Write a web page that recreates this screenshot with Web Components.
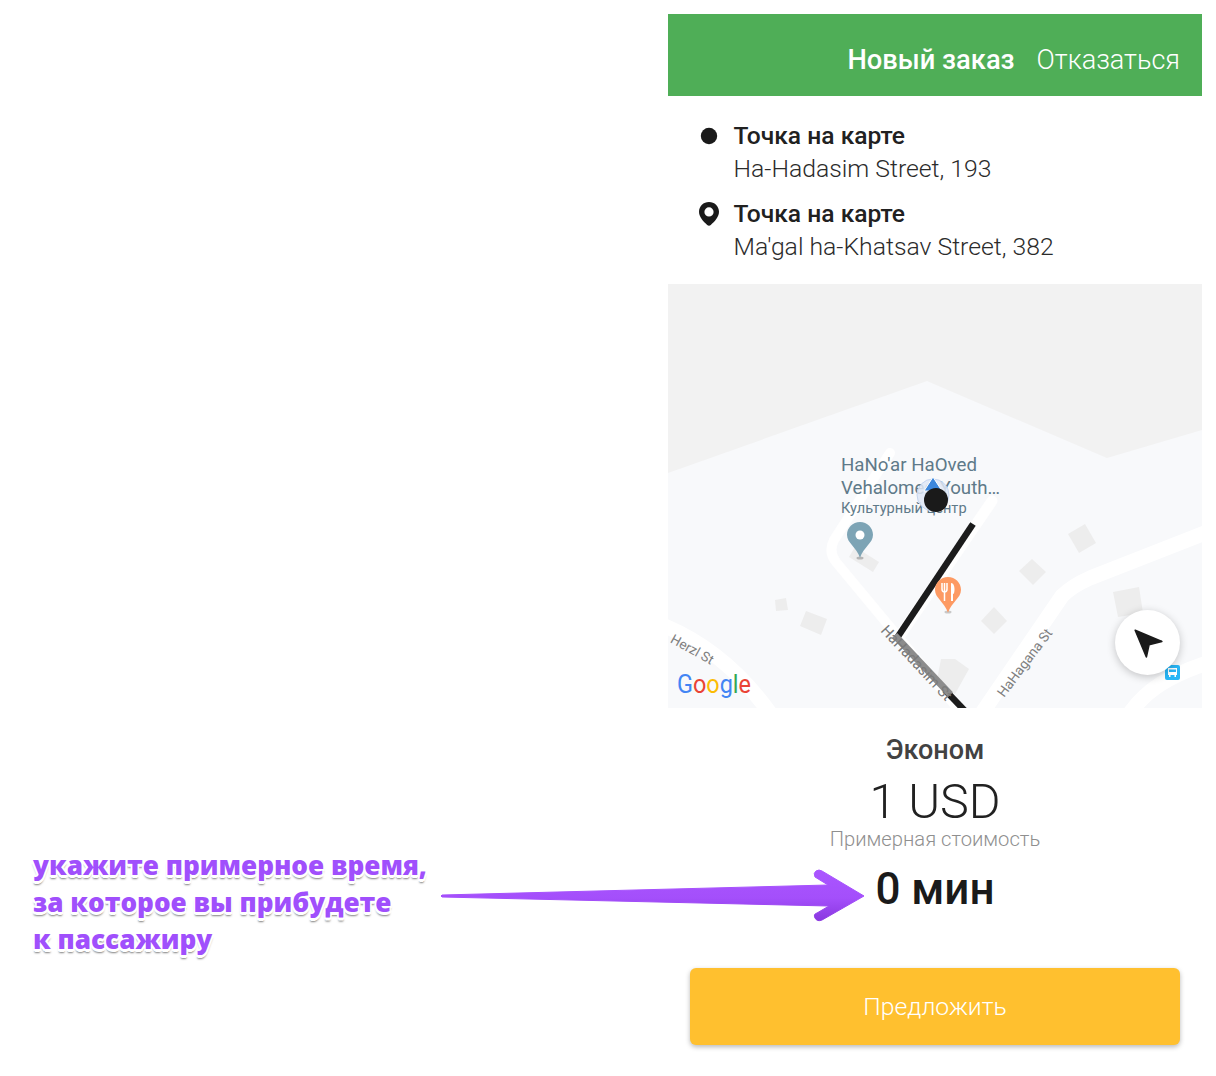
<!DOCTYPE html>
<html lang="ru"><head><meta charset="utf-8"><title>Новый заказ</title>
<style>
html,body{margin:0;padding:0;background:#fff}
body{font-family:Roboto,sans-serif;width:1216px;height:1076px;position:relative;overflow:hidden}
</style></head><body>
<order-screen>
  <order-header slot="header" title="Новый заказ" action="Отказаться"></order-header>
  <route-point kind="dot" name="Точка на карте" address="Ha-Hadasim Street, 193"></route-point>
  <route-point kind="pin" name="Точка на карте" address="Ma'gal ha-Khatsav Street, 382"></route-point>
  <route-map></route-map>
  <fare-summary tariff="Эконом" price="1 USD" note="Примерная стоимость" eta="0 мин"></fare-summary>
  <offer-button>Предложить</offer-button>
</order-screen>
<time-callout></time-callout>
<script>
function def(name, html){
  customElements.define(name, class extends HTMLElement{
    connectedCallback(){
      if(this.shadowRoot) return;
      const r=this.attachShadow({mode:'open'});
      r.innerHTML=typeof html==='function'?html(this):html;
    }
  });
}
def('order-screen',`<style>
:host{display:flex;flex-direction:column;width:534px;margin:14px 0 0 668px}
</style><slot name="header"></slot><slot></slot>`);
def('order-header',e=>`<style>
:host{display:flex;height:82px;background:#4fae57;color:#fff;align-items:center;justify-content:flex-end;padding:10px 22px 0;gap:22px;font-size:27px;box-sizing:border-box}
b{font-weight:500;font-size:27.300px}span{font-weight:300}
</style><b>${e.getAttribute('title')}</b><span>${e.getAttribute('action')}</span>`);
def('route-point',e=>`<style>
:host{display:grid;grid-template-columns:65.500px 1fr;color:#212121;font-size:24.750px;line-height:33px}
:host(:first-of-type){padding-top:23px}
:host([kind=pin]){padding-top:12px;padding-bottom:21px}
.i{display:flex;justify-content:center;align-items:center;padding-left:16px;height:33px}
b{font-weight:500;display:block;font-size:24.600px}span{font-weight:300;display:block;color:#2b2b2b}
svg{display:block}
</style><div class="i">${e.getAttribute('kind')==='dot'
 ?'<svg width="18" height="18" viewBox="0 0 18 18"><circle cx="9" cy="9" r="8.2" fill="#1a1a1a"/></svg>'
 :'<svg width="20" height="24" viewBox="0 0 20 24"><path fill="#1a1a1a" fill-rule="evenodd" d="M10 0C4.500 0 0 4.200 0 9.800c0 5.200 4.400 9.800 8.200 13.200 1 .9 2.600.9 3.600 0C15.600 19.600 20 15 20 9.800 20 4.200 15.500 0 10 0zm0 5.300a4.600 4.600 0 1 1 0 9.200 4.600 4.600 0 0 1 0-9.200z"/></svg>'}</div>
<div><b>${e.getAttribute('name')}</b><span>${e.getAttribute('address')}</span></div>`);
def('route-map',`<style>
:host{display:block;height:424px;background:#f8f9fb;position:relative;overflow:hidden}
svg{display:block}
.recenter{position:absolute;left:447px;top:326px;width:65px;height:65px;border-radius:50%;background:#fff;box-shadow:0 2px 8px rgba(0,0,0,.22);display:flex;align-items:center;justify-content:center}
</style>
<svg width="534" height="424" viewBox="668 284 534 424" font-family="Roboto,sans-serif">
<path fill="#f2f2f2" d="M668 284H1202V430L1107 458 927 381 668 473Z"/>
<g fill="none" stroke="#fff" stroke-linecap="round" stroke-linejoin="round">
<path stroke-width="10" d="M890 453 834 540Q828 552 836 562L964 716"/>
<path stroke-width="11" d="M992 501 897 640"/>
<path stroke-width="15" stroke-linecap="butt" d="M660 624C700 640 740 670 772 716"/>
<path stroke-width="15" stroke-linecap="butt" d="M980 716 1062 596Q1072 586 1090 578L1210 531"/>
<path stroke-width="15" stroke-linecap="butt" d="M1128 716C1145 690 1170 675 1210 662"/>
</g>
<g fill="#ededed">
<path d="M849 557 855 547 879 562 873 572Z"/>
<path d="M1068 534 1085 524 1096 543 1079 553Z"/>
<path d="M1019 571 1032 559 1046 572 1033 585Z"/>
<path d="M981 621 994 607 1007 621 994 634Z"/>
<path d="M775 600 786 598 788 610 776 611Z"/>
<path d="M806 611 827 619 821 635 800 626Z"/>
<path d="M1113 592 1139 587 1143 613 1118 617Z"/>
<path d="M941 659 955 659 969 669 955 694 936 685Z"/>
</g>
<path fill="none" stroke="#1c1c1c" stroke-width="6.500" stroke-linecap="butt" d="M973 524 897 638"/>
<path fill="none" stroke="#1c1c1c" stroke-width="6.500" d="M945 690 966 712"/>
<path fill="none" stroke="#8c8c8c" stroke-width="7" stroke-linecap="square" d="M897 638 948 692"/>
<text transform="translate(880 631) rotate(47)" font-size="15" fill="#7a7a7a">HaHadasim St</text>
<text transform="translate(669.500 642) rotate(29)" font-size="13.500" fill="#7f7f7f">Herzl St</text>
<text transform="translate(1004 698) rotate(-53)" font-size="13.800" fill="#7f7f7f">HaHagana St</text>
<g fill="#5f7a89" font-size="18.700">
<text x="841" y="471">HaNo'ar HaOved</text>
<text x="841" y="494">Vehalomed Youth…</text>
<text x="841" y="513" font-size="14.600">Культурный центр</text>
</g>
<circle cx="933" cy="495" r="16" fill="#dfe8f6" fill-opacity=".85" stroke="#c5d5ef"/>
<path d="M933 477 942 491H924Z" fill="#3d87dc" stroke="#fff" stroke-width="1"/>
<ellipse cx="860" cy="558" rx="3.500" ry="1.500" fill="#b5b5b5"/>
<path fill="#7da4b5" d="M860 522c-7.300 0-13 5.700-13 12.800 0 8.500 9.300 12 13 23 3.700-11 13-14.500 13-23 0-7.100-5.700-12.800-13-12.800z"/>
<circle cx="860" cy="535" r="4.500" fill="#fff"/>
<ellipse cx="948" cy="612" rx="3.500" ry="1.500" fill="#c9c9c9"/>
<path fill="#fd9a63" d="M948 577c-7.300 0-13 5.700-13 12.800 0 8.500 9.300 12 13 23 3.700-11 13-14.500 13-23 0-7.100-5.700-12.800-13-12.800z"/>
<path fill="none" stroke="#fff" stroke-width="1.500" d="M942 583V589Q942 592 944.500 592T947 589V583M944.500 583V601"/>
<path fill="#fff" d="M951 583c2.500 0 3.500 3 3.500 6s-.5 5-1.500 5v7h-2z"/>
<circle cx="936" cy="500" r="12" fill="#1a1a1a"/>
<rect x="1165" y="665" width="15" height="15" rx="2" fill="#29b6f6"/>
<path fill="#fff" d="M1168 668h9v7h-1v2h-1.500v-2h-4v2H1169v-2h-1zM1169 669.500v2.500h7v-2.500z"/>
<text x="677" y="693" font-size="25" font-family="Roboto,sans-serif" textLength="74" lengthAdjust="spacingAndGlyphs"><tspan fill="#4285f4">G</tspan><tspan fill="#ea4335">o</tspan><tspan fill="#fbbc05">o</tspan><tspan fill="#4285f4">g</tspan><tspan fill="#34a853">l</tspan><tspan fill="#ea4335">e</tspan></text>
</svg>
<div class="recenter"><svg width="32" height="32" viewBox="0 0 30 30"><path fill="#1a1a1a" stroke="#1a1a1a" stroke-width="1.500" stroke-linejoin="round" d="M3 3 28 13.500 16 16.500 13.500 28Z"/></svg></div>`);
def('fare-summary',e=>`<style>
:host{display:flex;flex-direction:column;align-items:center;text-align:center;color:#212121}
.t{font-weight:500;font-size:27px;line-height:30px;margin-top:27px;color:#424242}
.p{font-weight:300;font-size:48.500px;line-height:56px;margin-top:9px}
.n{font-weight:300;font-size:20.200px;line-height:24px;color:#8f8f8f;margin-top:-3px}
.e{font-weight:500;font-size:44px;line-height:52px;margin-top:12px;color:#1a1a1a}
</style><div class="t">${e.getAttribute('tariff')}</div><div class="p">${e.getAttribute('price')}</div><div class="n">${e.getAttribute('note')}</div><div class="e">${e.getAttribute('eta')}</div>`);
def('offer-button',`<style>
:host{display:flex;align-items:center;justify-content:center;height:77px;margin:53px 22px 0;background:#ffc02f;border-radius:6px;color:#fff;font-size:24.700px;font-weight:300;box-shadow:0 2px 5px rgba(0,0,0,.28);box-sizing:border-box}
</style><slot></slot>`);
def('time-callout',`<style>
:host{position:absolute;left:0;top:0;display:block}
.txt{position:absolute;left:33px;top:847px;width:420px;font-family:"Open Sans",sans-serif;font-weight:800;font-size:26.170px;line-height:37px;color:#a04ffc;white-space:nowrap;
text-shadow:-1.500px -1.500px 0 #fff,1.500px -1.500px 0 #fff,-1.500px 1.500px 0 #fff,1.500px 1.500px 0 #fff,0 2.500px 0 #fff,0 3.500px 2px rgba(0,0,0,.5)}
svg{position:absolute;left:430px;top:860px;display:block}
</style><div class="txt">укажите примерное время,<br>за которое вы прибудете<br>к пассажиру</div>
<svg width="450" height="70" viewBox="430 860 450 70"><defs><linearGradient id="g" x1="0" y1="0" x2="0" y2="1"><stop offset="0" stop-color="#aa55ff"/><stop offset=".55" stop-color="#a44ffb"/><stop offset="1" stop-color="#8a38e0"/></linearGradient></defs>
<path fill="url(#g)" stroke="url(#g)" stroke-width="1" stroke-linejoin="round" d="M442 895 828 885 815 877Q813 873 816 871T822 871L864 896 822 920Q817 922 815 918T817 913L829 906 442 897Q440 896 442 895Z"/></svg>`);
</script></body></html>
